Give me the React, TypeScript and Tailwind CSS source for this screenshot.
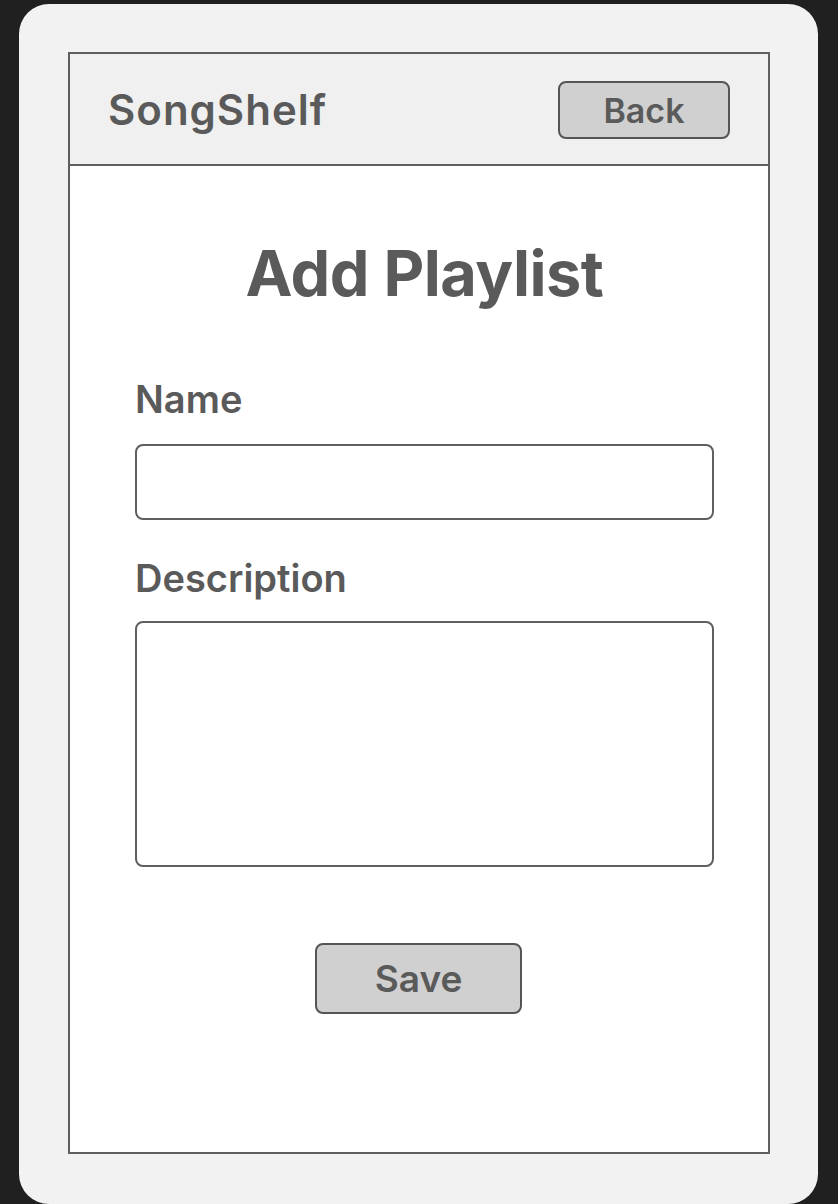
export default function App() {
  return (
    <div
      className="w-[838px] h-[1204px] bg-[#202020] pt-[4px] pl-[19px] pr-[20px] overflow-hidden"
      style={{ fontFamily: "Inter, 'Noto Sans', sans-serif" }}
    >
      <div className="h-[1200px] rounded-[30px] bg-[#f2f2f2] pt-[48px] pl-[49px]">
        {/* frame */}
        <div className="w-[702px] h-[1102px] border-2 border-[#5f5f5f] bg-white flex flex-col">
          <header className="h-[112px] bg-[#f0f0f0] border-b-2 border-[#5f5f5f] flex items-center justify-between pl-[38px] pr-[38px]">
            <span className="text-[42px] font-semibold text-[#5a5a5a] tracking-[1px]">SongShelf</span>
            <button className="w-[172px] h-[58px] rounded-[8px] border-2 border-[#555] bg-[#d0d0d0] text-[34px] font-semibold text-[#5a5a5a] mt-[2px]">
              Back
            </button>
          </header>

          <div className="flex flex-col pl-[65px] pr-[54px]">
            <h1 className="text-center text-[63px] font-bold text-[#5a5a5a] leading-[70px] mt-[72px] tracking-[-0.5px]">
              Add Playlist
            </h1>

            <label className="mt-[68px] text-[38px] font-semibold text-[#5a5a5a] leading-[46px]">Name</label>
            <input className="mt-[22px] h-[76px] rounded-[8px] border-2 border-[#5f5f5f] bg-white outline-none" />

            <label className="mt-[35px] text-[38px] font-semibold text-[#5a5a5a] leading-[46px]">Description</label>
            <textarea className="mt-[20px] h-[246px] rounded-[8px] border-2 border-[#5f5f5f] bg-white resize-none outline-none" />

            <div className="flex justify-center mt-[76px]">
              <button className="w-[207px] h-[71px] rounded-[8px] border-2 border-[#555] bg-[#d0d0d0] text-[37px] font-semibold text-[#5a5a5a] ml-[-12px]">
                Save
              </button>
            </div>
          </div>
        </div>
      </div>
    </div>
  );
}
